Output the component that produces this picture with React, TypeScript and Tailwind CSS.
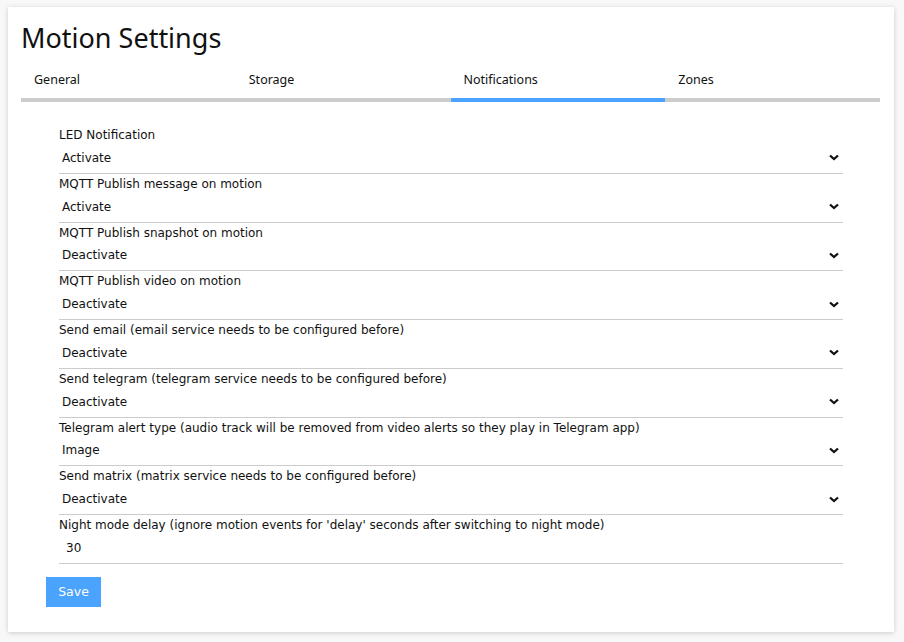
import React from "react";

type Field = {
  label: string;
  value: string;
  select?: boolean;
};

const fields: Field[] = [
  { label: "LED Notification", value: "Activate", select: true },
  { label: "MQTT Publish message on motion", value: "Activate", select: true },
  { label: "MQTT Publish snapshot on motion", value: "Deactivate", select: true },
  { label: "MQTT Publish video on motion", value: "Deactivate", select: true },
  { label: "Send email (email service needs to be configured before)", value: "Deactivate", select: true },
  { label: "Send telegram (telegram service needs to be configured before)", value: "Deactivate", select: true },
  {
    label: "Telegram alert type (audio track will be removed from video alerts so they play in Telegram app)",
    value: "Image",
    select: true,
  },
  { label: "Send matrix (matrix service needs to be configured before)", value: "Deactivate", select: true },
  { label: "Night mode delay (ignore motion events for 'delay' seconds after switching to night mode)", value: "30" },
];

const tabs = ["General", "Storage", "Notifications", "Zones"];

const Chevron = () => (
  <svg width="10" height="7" viewBox="0 0 10 7" className="shrink-0">
    <polyline points="1,1.5 5,5 9,1.5" fill="none" stroke="#111" strokeWidth="2.3" />
  </svg>
);

const Row = ({ label, value, select }: Field) => (
  <div className="flex flex-col">
    <label className="h-[18px] leading-[20px] text-[#111]">{label}</label>
    <div
      className={`flex items-center justify-between border-b border-[#cccccc] pr-[4px] ${
        select ? "h-[30.75px] pl-[3px]" : "h-[31px] pl-[7px]"
      }`}
    >
      <span>{value}</span>
      {select && <Chevron />}
    </div>
  </div>
);

export default function App() {
  return (
    <div className="min-h-[642px] bg-[#f8f8f8] pt-[7px] px-[8px] pb-[10px]">
      <div className="bg-white shadow-[0_1px_5px_rgba(0,0,0,0.18)] h-[625px] w-[886px] pl-[13px] pr-[14px] pt-[13px]">
        <h1
          className="text-[27px] leading-[36px] text-[#111] font-normal"
          style={{ fontFamily: '"Noto Sans", "Open Sans", sans-serif' }}
        >
          Motion Settings
        </h1>
        <div className="flex mt-[10px]" style={{ fontFamily: '"Noto Sans", sans-serif' }}>
          {tabs.map((t) => (
            <div
              key={t}
              className={`flex-1 h-[36px] pl-[13px] pt-[5px] text-[12.5px] text-[#111] border-b-4 ${
                t === "Notifications" ? "border-[#4aa3fe]" : "border-[#cccccc]"
              }`}
            >
              {t}
            </div>
          ))}
        </div>
        <div
          className="text-[12px] text-[#111]"
          style={{ fontFamily: '"DejaVu Sans", Verdana, sans-serif' }}
        >
          <div className="flex flex-col ml-[38px] mr-[37px] mt-[23px]">
            {fields.map((f) => (
              <Row key={f.label} {...f} />
            ))}
          </div>
          <button className="mt-[13px] ml-[25px] h-[30px] w-[55px] bg-[#4aa3fe] text-white text-[12.5px]">
            Save
          </button>
        </div>
      </div>
    </div>
  );
}
